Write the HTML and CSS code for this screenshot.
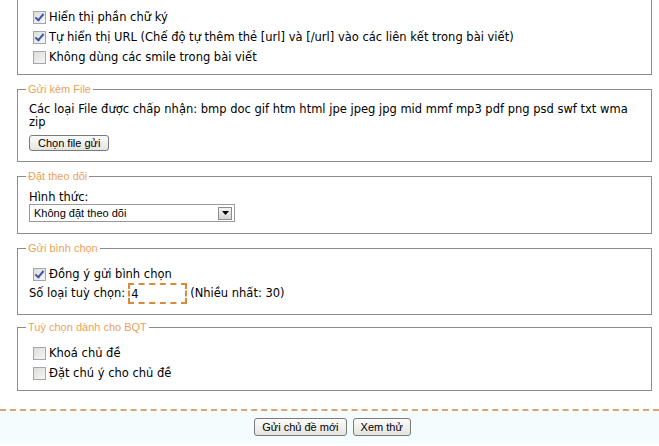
FILE: index.html
```html
<!DOCTYPE html>
<html lang="vi">
  <head>
    <meta charset="UTF-8" />
    <title>Gửi chủ đề mới</title>
    <link rel="stylesheet" href="styles.css">
  </head>
  <body>
    <div class="options">
      <fieldset class="box box-first">
        <div class="row"><span class="cb checked"></span>Hiển thị phần chữ ký</div>
        <div class="row"><span class="cb checked"></span>Tự hiển thị URL (Chế độ tự thêm thẻ [url] và [/url] vào các liên kết trong bài viết)</div>
        <div class="row"><span class="cb"></span>Không dùng các smile trong bài viết</div>
      </fieldset>

      <fieldset class="box box-file">
        <legend>Gửi kèm File</legend>
        <div class="text">Các loại File được chấp nhận: bmp doc gif htm html jpe jpeg jpg mid mmf mp3 pdf png psd swf txt wma zip</div>
        <button class="btn btn-file">Chọn file gửi</button>
      </fieldset>

      <fieldset class="box box-watch">
        <legend>Đặt theo dõi</legend>
        <div class="text">Hình thức:</div>
        <div class="select">
          <span class="select-value">Không đặt theo dõi</span>
          <span class="select-arrow">
            <svg width="7" height="4" viewBox="0 0 7 4"><path d="M0 0h7L3.5 4z" fill="#000"/></svg>
          </span>
        </div>
      </fieldset>

      <fieldset class="box box-poll">
        <legend>Gửi bình chọn</legend>
        <div class="row row-poll"><span class="cb checked"></span>Đồng ý gửi bình chọn</div>
        <div class="count">
          Số loại tuỳ chọn: <span class="count-input">4</span> (Nhiều nhất: 30)
        </div>
      </fieldset>

      <fieldset class="box box-admin">
        <legend>Tuỳ chọn dành cho BQT</legend>
        <div class="row"><span class="cb"></span>Khoá chủ đề</div>
        <div class="row"><span class="cb"></span>Đặt chú ý cho chủ đề</div>
      </fieldset>
    </div>

    <div class="actions">
      <button class="btn">Gửi chủ đề mới</button>
      <button class="btn">Xem thử</button>
    </div>
  </body>
</html>
```

FILE: styles.css
```css
body {
  margin: 0;
  background: #fff;
  font-family: "DejaVu Sans", Verdana, sans-serif;
  font-size: 11.5px;
  color: #000;
}
.options {
  padding: 0 7px 0 17px;
}
.box {
  margin: 0 0 7px;
  padding: 0 10px 10px 11px;
  border: 1px solid #8c8c8c;
  min-width: 0;
}
.box legend {
  margin-left: -3px;
  padding: 0 2px;
  font-family: "Liberation Sans", Tahoma, sans-serif;
  font-size: 11px;
  line-height: 14px;
  color: #eaa35a;
}
.box-first {
  border-top: none;
  padding-top: 7px;
  padding-bottom: 7px;
}
.row {
  display: flex;
  align-items: center;
  height: 20px;
  line-height: 13px;
}
.cb {
  box-sizing: border-box;
  width: 13px;
  height: 13px;
  margin: 0 3px 0 4px;
  border: 1px solid #a0a6b4;
  background: linear-gradient(135deg, #dcdcd8, #f6f6f4);
  position: relative;
}
.cb.checked::after {
  content: "";
  position: absolute;
  left: 3px;
  top: 0px;
  width: 3px;
  height: 7px;
  border: solid #3d57a8;
  border-width: 0 2px 2px 0;
  transform: rotate(40deg);
}
.text {
  line-height: 13px;
}
.box-file {
  padding-top: 7px;
}
.btn {
  height: 16px;
  padding: 0 8px;
  border: 1px solid #7a7a7a;
  border-radius: 3px;
  background: linear-gradient(#fbfbfa, #e4e4df);
  font-family: "Liberation Sans", Tahoma, sans-serif;
  font-size: 11px;
  line-height: 14px;
  color: #000;
}
.btn-file {
  display: block;
  margin-top: 6px;
}
.box-watch {
  padding-top: 8px;
  padding-bottom: 11px;
}
.select {
  display: flex;
  align-items: center;
  justify-content: space-between;
  box-sizing: border-box;
  width: 206px;
  height: 18px;
  border: 1px solid #9a9a9a;
  padding: 0 2px 0 4px;
  font-family: "Liberation Sans", Tahoma, sans-serif;
  font-size: 11px;
}
.select-arrow {
  display: flex;
  align-items: center;
  justify-content: center;
  box-sizing: border-box;
  width: 14px;
  height: 13px;
  border: 1px solid #8c8c8c;
  background: linear-gradient(#f4f4f4, #d4d4d0);
}
.box-poll {
  padding-top: 10px;
  padding-bottom: 11px;
  margin-bottom: 5px;
}
.row-poll {
  height: 18px;
}
.count {
  display: flex;
  align-items: center;
  height: 20px;
}
.count-input {
  box-sizing: border-box;
  width: 59px;
  height: 21px;
  margin: 0 3px 0 3px;
  padding: 3px 0 0 1px;
  border: 2px dashed #d8893a;
  line-height: 13px;
}
.box-admin {
  padding-top: 9px;
  padding-bottom: 7px;
  margin-bottom: 18px;
}
.actions {
  display: flex;
  justify-content: center;
  gap: 6px;
  padding: 7px 0 8px 6px;
  background: #f5fcfd;
  border-top: 2px dashed #d7a672;
}
.actions .btn {
  height: 18px;
  padding: 0 7px;
}
```
